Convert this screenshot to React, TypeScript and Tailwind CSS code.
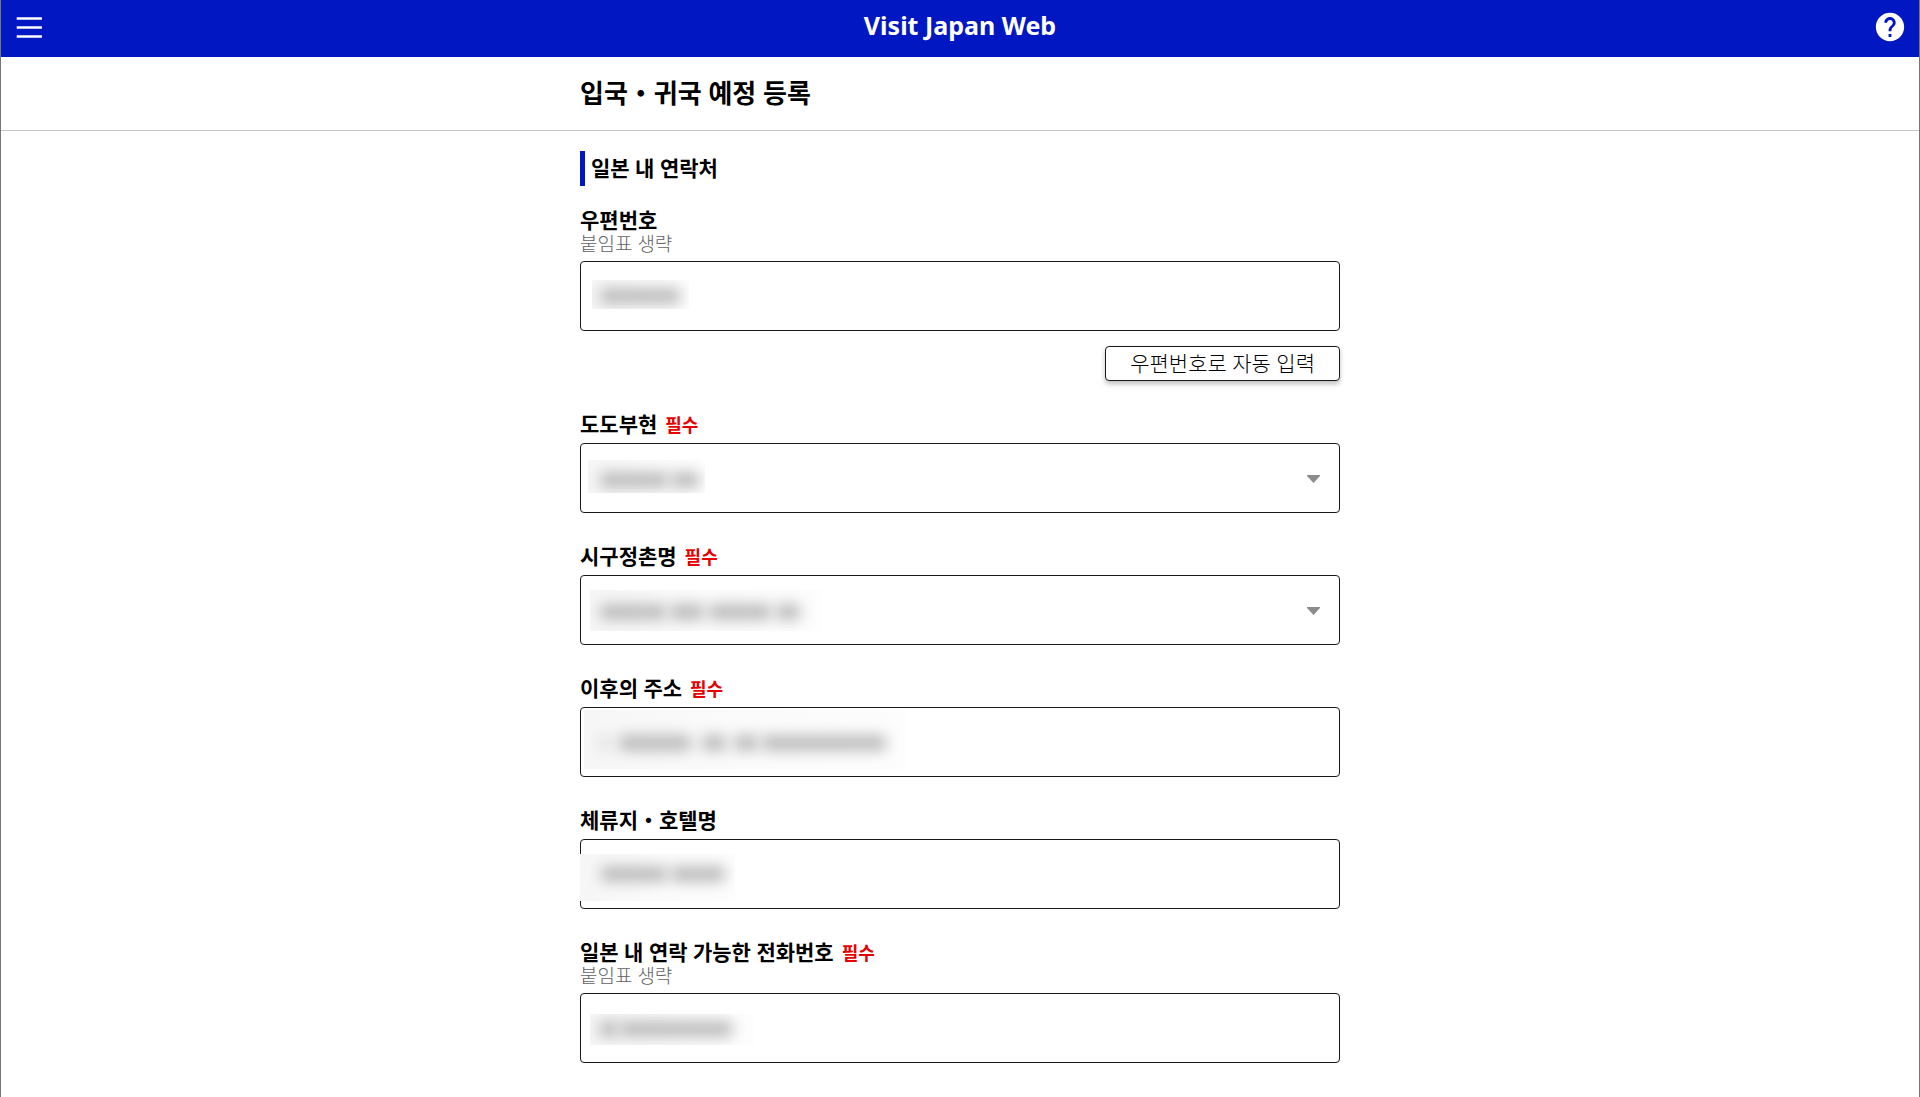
import { ReactNode } from "react";
import { MdHelp } from "react-icons/md";

type TBar = { x: number; w: number };

type TMask = {
  left: number;
  top: number;
  width: number;
  height: number;
  center: number;
  bars: TBar[];
};

type TField = {
  id: string;
  label: string;
  required?: boolean;
  hint?: string;
  type: "text" | "select";
  autofill?: string;
  mask: TMask;
};

// mask numbers are relative to the top left corner of the field's box
const fields: TField[] = [
  {
    id: "postal-code",
    label: "우편번호",
    hint: "붙임표 생략",
    type: "text",
    autofill: "우편번호로 자동 입력",
    mask: { left: 12, top: 19, width: 97, height: 29, center: 35, bars: [{ x: 20, w: 80 }] },
  },
  {
    id: "prefecture",
    label: "도도부현",
    required: true,
    type: "select",
    mask: {
      left: 8,
      top: 17,
      width: 117,
      height: 33,
      center: 37,
      bars: [
        { x: 20, w: 68 },
        { x: 91, w: 28 },
      ],
    },
  },
  {
    id: "city",
    label: "시구정촌명",
    required: true,
    type: "select",
    mask: {
      left: 10,
      top: 15,
      width: 231,
      height: 41,
      center: 37,
      bars: [
        { x: 20, w: 66 },
        { x: 90, w: 34 },
        { x: 129, w: 62 },
        { x: 196, w: 24 },
      ],
    },
  },
  {
    id: "address",
    label: "이후의 주소",
    required: true,
    type: "text",
    mask: {
      left: 4,
      top: 3,
      width: 321,
      height: 59,
      center: 36,
      bars: [
        { x: 22, w: 4 },
        { x: 39, w: 72 },
        { x: 122, w: 24 },
        { x: 154, w: 24 },
        { x: 182, w: 124 },
      ],
    },
  },
  {
    id: "hotel",
    label: "체류지・호텔명",
    type: "text",
    mask: {
      left: 0,
      top: 15,
      width: 155,
      height: 47,
      center: 35,
      bars: [
        { x: 21, w: 66 },
        { x: 91, w: 54 },
      ],
    },
  },
  {
    id: "phone",
    label: "일본 내 연락 가능한 전화번호",
    required: true,
    hint: "붙임표 생략",
    type: "text",
    mask: {
      left: 10,
      top: 21,
      width: 164,
      height: 31,
      center: 36,
      bars: [
        { x: 19, w: 19 },
        { x: 40, w: 112 },
      ],
    },
  },
];

const boxClass =
  "block h-[70px] w-full rounded border border-[#1a1a1c] bg-white px-5 text-xl outline-none";

const Mask = ({ mask }: { mask: TMask }) => (
  <div
    aria-hidden="true"
    className="pointer-events-none absolute overflow-hidden bg-white"
    style={{ left: mask.left, top: mask.top, width: mask.width, height: mask.height }}
  >
    <div className="h-full w-full bg-linear-to-r from-[#f6f6f6] via-[#fbfbfb] to-[#fdfdfd]" />
    {mask.bars.map((bar) => (
      <div
        key={bar.x}
        className="absolute h-4 rounded bg-[#bcbcbc] blur-[7px]"
        style={{ left: bar.x - mask.left, top: mask.center - mask.top - 8, width: bar.w }}
      />
    ))}
  </div>
);

const Header = () => (
  <header className="flex h-[57px] items-center justify-between bg-[#0017c1] px-3 pb-1 text-white">
    <button type="button" aria-label="메뉴" className="cursor-pointer">
      <svg width="34" height="34" viewBox="0 0 34 34" fill="none">
        <path d="M3.7 8.4H28.9M3.7 17.4H28.9M3.7 26.4H28.9" stroke="currentColor" strokeWidth="2.5" />
      </svg>
    </button>
    <p className="pb-1 text-[25px] leading-8 font-bold">Visit Japan Web</p>
    <button type="button" aria-label="도움말" className="cursor-pointer">
      <MdHelp size={34} />
    </button>
  </header>
);

const Field = ({ field, children }: { field: TField; children: ReactNode }) => (
  <div>
    <label htmlFor={field.id} className="block pb-0.5 text-[21px] leading-[22px] font-bold">
      {field.label}
      {field.required && (
        <span className="ml-2 text-lg leading-none font-bold text-[#e60000]">필수</span>
      )}
    </label>
    {field.hint && (
      <p className="text-[19px] leading-[22px] font-light text-[#626264]">{field.hint}</p>
    )}
    <div className="relative mt-1.5">
      {children}
      <Mask mask={field.mask} />
    </div>
    {field.autofill && (
      <div className="mt-[15px] flex justify-end">
        <button
          type="button"
          className="h-[35px] cursor-pointer rounded border border-[#1a1a1c] bg-white px-6 pb-0.5 text-[21px] leading-6 font-light shadow-[0_3px_5px_rgba(0,0,0,0.25)]"
        >
          {field.autofill}
        </button>
      </div>
    )}
  </div>
);

const App = () => {
  return (
    <div
      lang="ko"
      className="min-h-screen border-x border-[#767676] bg-white font-['Noto_Sans','Noto_Sans_CJK_KR',sans-serif] text-black"
    >
      <Header />
      <div className="border-b border-[#c4c4c4] px-4">
        <h1 className="mx-auto max-w-[760px] py-5 text-[26px] leading-[33px] font-bold">
          입국・귀국 예정 등록
        </h1>
      </div>
      <main className="px-4 pt-5 pb-8">
        <form className="mx-auto max-w-[760px]">
          <h2 className="mb-[23px] border-l-[5px] border-[#0017c1] pl-1.5 text-[21px] leading-[35px] font-bold">
            일본 내 연락처
          </h2>
          <div className="flex flex-col gap-8">
            {fields.map((field) => (
              <Field key={field.id} field={field}>
                {field.type === "select" ? (
                  <>
                    <select id={field.id} className={`${boxClass} appearance-none`}>
                      <option value=""></option>
                    </select>
                    <svg
                      aria-hidden="true"
                      className="pointer-events-none absolute top-8 right-5"
                      width="13"
                      height="8"
                      viewBox="0 0 13 8"
                    >
                      <path d="M0 0H13V1L6.5 8L0 1Z" fill="#8c8c8c" />
                    </svg>
                  </>
                ) : (
                  <input id={field.id} type="text" className={boxClass} />
                )}
              </Field>
            ))}
          </div>
        </form>
      </main>
    </div>
  );
};

export default App;
